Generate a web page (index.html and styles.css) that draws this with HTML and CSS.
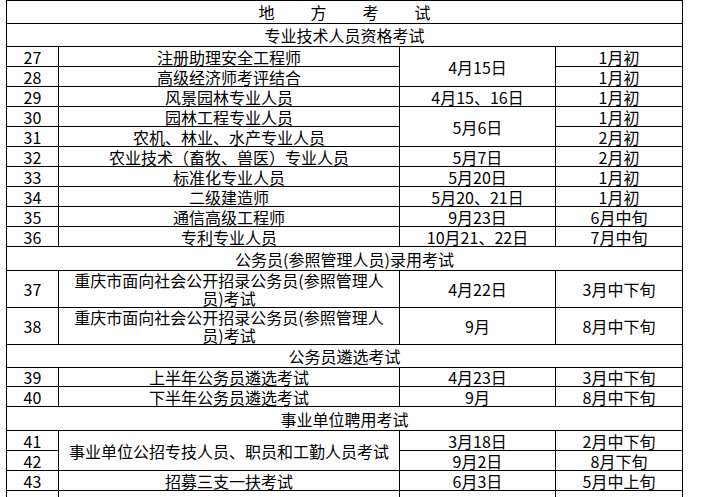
FILE: index.html
```html
<!DOCTYPE html>
<html lang="zh">
<head>
<meta charset="utf-8">
<title>地方考试</title>
<link rel="stylesheet" href="styles.css">
</head>
<body>
<table class="exam">
  <colgroup>
    <col class="c-no">
    <col class="c-name">
    <col class="c-date">
    <col class="c-time">
  </colgroup>
  <tbody>
    <tr class="r-head"><td colspan="4" class="title">地方考试</td></tr>
    <tr class="r-head"><td colspan="4">专业技术人员资格考试</td></tr>
    <tr class="r-n"><td>27</td><td>注册助理安全工程师</td><td rowspan="2">4月15日</td><td>1月初</td></tr>
    <tr class="r-n"><td>28</td><td>高级经济师考评结合</td><td>1月初</td></tr>
    <tr class="r-n"><td>29</td><td>风景园林专业人员</td><td>4月15、16日</td><td>1月初</td></tr>
    <tr class="r-n"><td>30</td><td>园林工程专业人员</td><td rowspan="2">5月6日</td><td>1月初</td></tr>
    <tr class="r-n"><td>31</td><td>农机、林业、水产专业人员</td><td>2月初</td></tr>
    <tr class="r-n"><td>32</td><td>农业技术（畜牧、兽医）专业人员</td><td>5月7日</td><td>2月初</td></tr>
    <tr class="r-n"><td>33</td><td>标准化专业人员</td><td>5月20日</td><td>1月初</td></tr>
    <tr class="r-n"><td>34</td><td>二级建造师</td><td>5月20、21日</td><td>1月初</td></tr>
    <tr class="r-n"><td>35</td><td>通信高级工程师</td><td>9月23日</td><td>6月中旬</td></tr>
    <tr class="r-n"><td>36</td><td>专利专业人员</td><td>10月21、22日</td><td>7月中旬</td></tr>
    <tr class="r-sec"><td colspan="4">公务员(参照管理人员)录用考试</td></tr>
    <tr class="r-dbl"><td>37</td><td class="wrap">重庆市面向社会公开招录公务员(参照管理人<br>员)考试</td><td>4月22日</td><td>3月中下旬</td></tr>
    <tr class="r-dbl2"><td>38</td><td class="wrap">重庆市面向社会公开招录公务员(参照管理人<br>员)考试</td><td>9月</td><td>8月中下旬</td></tr>
    <tr class="r-sec2"><td colspan="4">公务员遴选考试</td></tr>
    <tr class="r-n19"><td>39</td><td>上半年公务员遴选考试</td><td>4月23日</td><td>3月中下旬</td></tr>
    <tr class="r-n"><td>40</td><td>下半年公务员遴选考试</td><td>9月</td><td>8月中下旬</td></tr>
    <tr class="r-sec"><td colspan="4">事业单位聘用考试</td></tr>
    <tr class="r-n"><td>41</td><td rowspan="2">事业单位公招专技人员、职员和工勤人员考试</td><td>3月18日</td><td>2月中下旬</td></tr>
    <tr class="r-n"><td>42</td><td>9月2日</td><td>8月下旬</td></tr>
    <tr class="r-n"><td>43</td><td>招募三支一扶考试</td><td>6月3日</td><td>5月中上旬</td></tr>
    <tr class="r-n"><td></td><td></td><td></td><td></td></tr>
  </tbody>
</table>
</body>
</html>
```
FILE: styles.css
```css
html, body {
  margin: 0;
  padding: 0;
  background: #fff;
  overflow: hidden;
  height: 497px;
}

.exam {
  margin-left: 6px;
  border-collapse: collapse;
  table-layout: fixed;
  width: 677px;
  font-family: "Noto Sans CJK SC", "Noto Sans", sans-serif;
  font-size: 16px;
  color: #000;
}

.c-no { width: 52px; }
.c-name { width: 341px; }
.c-date { width: 156px; }
.c-time { width: 127px; }

.exam td {
  border: 1px solid #000;
  padding: 0;
  text-align: center;
  vertical-align: middle;
  line-height: 18px;
  white-space: nowrap;
}

.exam .title {
  letter-spacing: 36px;
  padding-left: 36px;
}

.exam .wrap {
  white-space: normal;
  line-height: 18px;
}

.r-head td { height: 22px; }
.r-n td { height: 19px; }
.r-n19 td { height: 18px; }
.r-sec td { height: 23px; }
.r-sec2 td { height: 22px; }
.r-dbl td { height: 36px; }
.r-dbl2 td { height: 35px; }
```
